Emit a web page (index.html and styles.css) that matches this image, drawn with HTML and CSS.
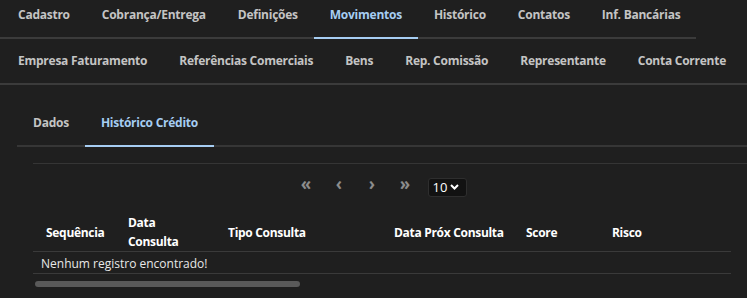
FILE: index.html
```html
<!DOCTYPE html>
<html lang="pt-BR">
<head>
    <meta charset="UTF-8">
    <meta name="viewport" content="width=device-width, initial-scale=1.0">
    <title>Movimentos - Histórico Crédito</title>
    <link rel="stylesheet" href="styles.css">
</head>
<body>
    <div class="page">
        <nav class="tabs tabs-main">
            <a class="tab">Cadastro</a>
            <a class="tab">Cobrança/Entrega</a>
            <a class="tab">Definições</a>
            <a class="tab active">Movimentos</a>
            <a class="tab">Histórico</a>
            <a class="tab">Contatos</a>
            <a class="tab">Inf. Bancárias</a>
        </nav>
        <nav class="tabs tabs-sub">
            <a class="tab">Empresa Faturamento</a>
            <a class="tab">Referências Comerciais</a>
            <a class="tab">Bens</a>
            <a class="tab">Rep. Comissão</a>
            <a class="tab">Representante</a>
            <a class="tab">Conta Corrente</a>
        </nav>

        <div class="panel">
            <nav class="tabs tabs-inner">
                <a class="tab">Dados</a>
                <a class="tab active">Histórico Crédito</a>
            </nav>

            <div class="grid-box">
                <div class="pager">
                    <span class="pg-btn">&laquo;</span>
                    <span class="pg-btn">&lsaquo;</span>
                    <span class="pg-btn">&rsaquo;</span>
                    <span class="pg-btn">&raquo;</span>
                    <div class="page-size">
                        <span>10</span>
                        <svg width="9" height="6" viewBox="0 0 9 6"><path d="M1 1l3.5 3.5L8 1" fill="none" stroke="#fff" stroke-width="2"/></svg>
                    </div>
                </div>

                <table class="grid">
                    <thead>
                        <tr>
                            <th class="c-seq">Sequência</th>
                            <th class="c-data">Data<br>Consulta</th>
                            <th class="c-tipo">Tipo Consulta</th>
                            <th class="c-prox">Data Próx Consulta</th>
                            <th class="c-score">Score</th>
                            <th class="c-risco">Risco</th>
                        </tr>
                    </thead>
                    <tbody>
                        <tr>
                            <td colspan="6">Nenhum registro encontrado!</td>
                        </tr>
                    </tbody>
                </table>
                <div class="scrollbar"><div class="thumb"></div></div>
            </div>
        </div>
    </div>
</body>
</html>
```

FILE: styles.css
```css
body {
    margin: 0;
    background-color: #1f1f1f;
    font-family: "Open Sans", "Noto Sans", sans-serif;
    font-size: 12px;
    color: #d0d0d0;
    overflow: hidden;
}
.page {
    width: 747px;
}
.tabs {
    display: flex;
}
.tab {
    padding: 0 16px;
    font-weight: 700;
    letter-spacing: -0.25px;
    color: #c4c4c4;
    white-space: nowrap;
    cursor: pointer;
    margin-bottom: -2px;
    border-bottom: 2px solid transparent;
}
.tab.active {
    color: #a6cdf2;
    border-bottom-color: #a6cdf2;
}
.tabs-main {
    display: inline-flex;
    padding-left: 2px;
    border-bottom: 2px solid #3b3b3b;
}
.tabs-main .tab {
    line-height: 30px;
    padding-bottom: 7px;
}
.tabs-sub {
    padding-left: 2px;
    border-bottom: 2px solid #3b3b3b;
}
.tabs-sub .tab {
    line-height: 44px;
}
.panel {
    padding: 16px 0 0 17px;
}
.tabs-inner {
    border-bottom: 2px solid #363636;
}
.tabs-inner .tab {
    line-height: 44px;
}
.grid-box {
    margin: 16px 0 0 16px;
    border-top: 1px solid #353535;
}
.pager {
    display: flex;
    align-items: center;
    justify-content: center;
    padding: 12px 0 0 0;
    height: 22px;
    margin-left: -24px;
}
.pg-btn {
    width: 33px;
    text-align: center;
    font-size: 17px;
    line-height: 18px;
    color: #8c8c8c;
    font-weight: 700;
    position: relative;
    top: -3px;
}
.page-size {
    margin-left: 6px;
    width: 39px;
    height: 19px;
    box-sizing: border-box;
    background: #121212;
    border: 1px solid #2e2e2e;
    border-radius: 3px;
    display: flex;
    align-items: center;
    gap: 3px;
    padding-left: 4px;
    color: #fff;
    font-size: 13px;
}
.grid {
    width: 698px;
    border-collapse: collapse;
    margin-top: 14px;
}
.grid th {
    text-align: left;
    font-weight: 700;
    letter-spacing: -0.3px;
    color: #ffffff;
    line-height: 19px;
    padding: 1px 0 0 0;
    vertical-align: middle;
    height: 38px;
    border-bottom: 1px solid #3a3a3a;
}
.c-seq { width: 95px; padding-left: 13px !important; box-sizing: border-box; }
.c-data { width: 100px; }
.c-tipo { width: 166px; }
.c-prox { width: 132px; }
.c-score { width: 86px; }
.grid td {
    padding: 1px 8px 0;
    height: 20px;
    color: #e8e8e8;
    border-bottom: 1px solid #3a3a3a;
}
.scrollbar {
    padding: 7px 0 0 2px;
}
.thumb {
    width: 265px;
    height: 6px;
    border-radius: 3px;
    background: #5a5a5a;
}
```
